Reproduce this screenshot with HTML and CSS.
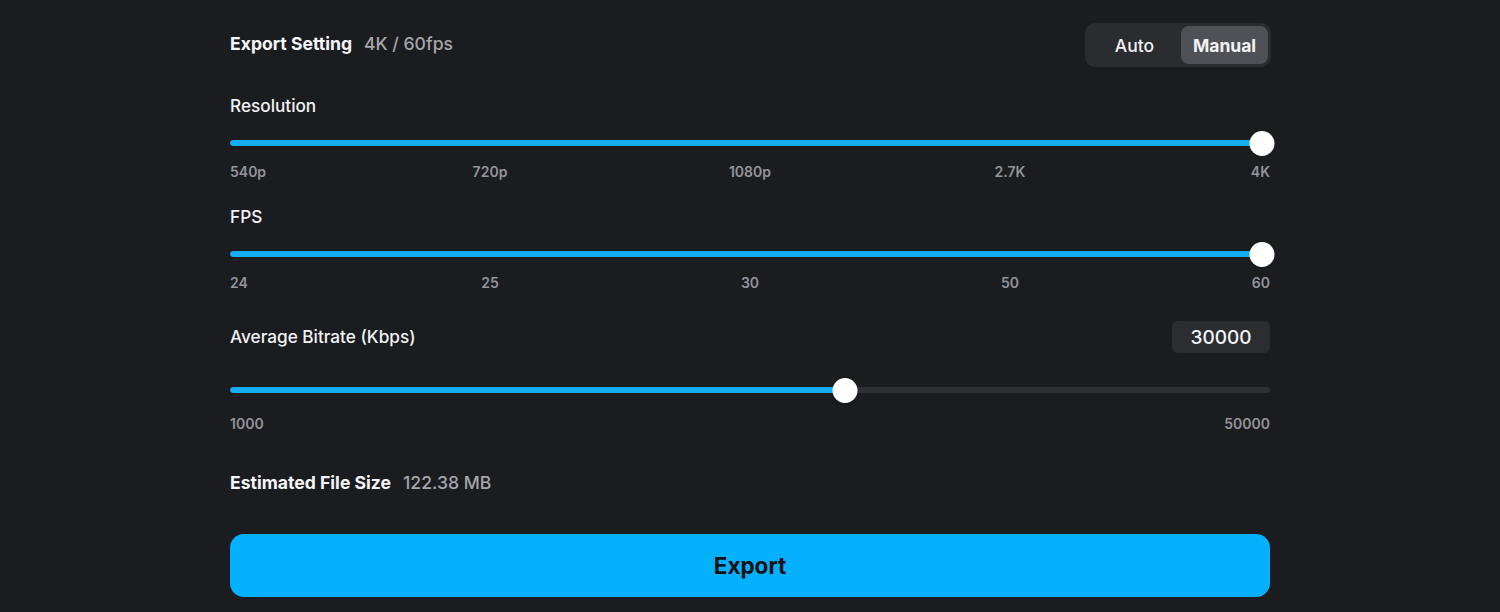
FILE: index.html
```html
<!DOCTYPE html>
<html lang="en">
<head>
<meta charset="utf-8">
<title>Export Setting</title>
<link rel="stylesheet" href="styles.css">
</head>
<body>
<main class="panel">
  <header class="head">
    <div class="title"><span class="title-main">Export Setting</span><span class="title-sub">4K / 60fps</span></div>
    <div class="seg">
      <button class="seg-btn">Auto</button>
      <button class="seg-btn active">Manual</button>
    </div>
  </header>

  <section class="group">
    <div class="label">Resolution</div>
    <div class="slider">
      <div class="track"><div class="fill" style="width:100%"></div></div>
      <div class="thumb" style="left:99.2%"></div>
    </div>
    <div class="ticks">
      <span>540p</span><span>720p</span><span>1080p</span><span>2.7K</span><span>4K</span>
    </div>
  </section>

  <section class="group">
    <div class="label">FPS</div>
    <div class="slider">
      <div class="track"><div class="fill" style="width:100%"></div></div>
      <div class="thumb" style="left:99.2%"></div>
    </div>
    <div class="ticks">
      <span>24</span><span>25</span><span>30</span><span>50</span><span>60</span>
    </div>
  </section>

  <section class="group bitrate">
    <div class="row">
      <div class="label">Average Bitrate (Kbps)</div>
      <div class="value-box">30000</div>
    </div>
    <div class="slider">
      <div class="track"><div class="fill" style="width:59.1%"></div></div>
      <div class="thumb" style="left:59.1%"></div>
    </div>
    <div class="ticks two">
      <span>1000</span><span>50000</span>
    </div>
  </section>

  <div class="estimate"><span class="est-label">Estimated File Size</span><span class="est-value">122.38 MB</span></div>

  <button class="export">Export</button>
</main>
</body>
</html>
```

FILE: styles.css
```css
* { box-sizing: border-box; }
html, body { margin: 0; padding: 0; }
body {
  background: #1b1c20;
  font-family: Inter, "Noto Sans", sans-serif;
  color: #f2f2f4;
  height: 612px;
  overflow: hidden;
}
.panel {
  width: 1040px;
  margin: 0 auto;
  padding-top: 23px;
  display: flex;
  flex-direction: column;
}
.head {
  display: flex;
  justify-content: space-between;
  align-items: center;
  height: 44px;
}
.title { display: flex; align-items: baseline; gap: 12px; margin-top: -3px; }
.title-main { font-size: 17.6px; font-weight: 700; color: #f5f5f7; }
.title-sub { font-size: 17.6px; font-weight: 500; color: #a6a6ab; }
.seg {
  display: flex;
  background: #2b2c30;
  border-radius: 10px;
  padding: 3px;
  width: 186px;
  height: 44px;
  margin-right: -1px;
}
.seg-btn {
  flex: 1;
  border: 0;
  background: transparent;
  color: #f2f2f4;
  font-family: inherit;
  font-size: 17.5px;
  font-weight: 500;
  border-radius: 8px;
  padding: 0;
}
.seg-btn.active {
  background: #505156;
  font-weight: 700;
  flex: 0 0 87px;
}
.group { display: flex; flex-direction: column; }
.head + .group { margin-top: 29px; }
.group + .group { margin-top: 27px; }
.label { font-size: 17.2px; font-weight: 500; line-height: 20px; color: #f2f2f4; }
.slider {
  position: relative;
  height: 24px;
  margin-top: 15px;
  display: flex;
  align-items: center;
}
.track {
  width: 100%;
  height: 6px;
  border-radius: 3px;
  background: #2f3034;
  overflow: hidden;
}
.fill { height: 100%; background: #14aef0; border-radius: 3px; }
.thumb {
  position: absolute;
  top: 0;
  width: 25px;
  height: 25px;
  border-radius: 50%;
  background: #ffffff;
  transform: translateX(-50%);
}
.ticks {
  display: grid;
  margin-top: 9px;
  font-size: 14px;
  font-weight: 600;
  line-height: 16px;
  color: #94949a;
}
.ticks span { text-align: center; }
.ticks span:first-child { text-align: left; }
.ticks span:last-child { text-align: right; }
.ticks:not(.two) { grid-template-columns: 130px 260px 260px 260px 130px; }
.ticks.two { grid-template-columns: 1fr 1fr; margin-top: 14px; }
.group.bitrate { margin-top: 30px; }
.row { display: flex; justify-content: space-between; align-items: center; height: 32px; }
.value-box {
  width: 98px;
  height: 32px;
  background: #2c2d31;
  border-radius: 6px;
  display: flex;
  align-items: center;
  justify-content: center;
  font-size: 19px;
  font-weight: 500;
  color: #f5f5f7;
}
.bitrate .slider { margin-top: 25px; }
.estimate { margin-top: 41px; display: flex; align-items: baseline; gap: 12px; line-height: 20px; }
.est-label { font-size: 17.6px; font-weight: 700; color: #f5f5f7; }
.est-value { font-size: 17.6px; font-weight: 500; color: #a6a6ab; }
.export {
  margin-top: 41px;
  height: 63px;
  width: 100%;
  border: 0;
  border-radius: 14px;
  background: #05b1fc;
  color: #101114;
  font-family: inherit;
  font-size: 22.5px;
  font-weight: 700;
}
```
